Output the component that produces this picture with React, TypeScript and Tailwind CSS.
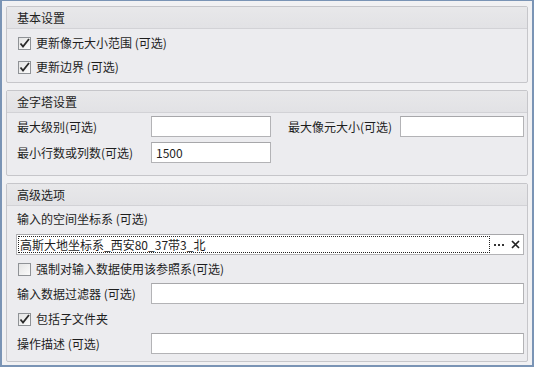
import React from "react";

const font = { fontFamily: '"Noto Sans CJK SC", "Noto Sans", sans-serif' };

function Check({ checked }: { checked: boolean }) {
  return (
    <span className="relative inline-flex h-[13px] w-[13px] shrink-0 items-center justify-center border border-[#8f9296] bg-gradient-to-br from-[#e4e4e4] to-[#fbfbfb]">
      {checked && (
        <svg width="13" height="13" viewBox="0 0 13 13" className="absolute left-[-1px] top-[-1px]">
          <path d="M2.5 6.5 L5 9.5 L11 2" fill="none" stroke="#2a2a2a" strokeWidth="1.8" />
        </svg>
      )}
    </span>
  );
}

function CheckRow({ checked, label }: { checked: boolean; label: string }) {
  return (
    <div className="flex h-[24px] shrink-0 items-center pl-[11px]">
      <Check checked={checked} />
      <span className="ml-[5px] text-[12px] leading-none text-[#1e1e1e]">{label}</span>
    </div>
  );
}

function Input({ w, value }: { w: string; value?: string }) {
  return (
    <div
      className={`${w} flex h-[21px] shrink-0 items-center border border-[#b3b3b6] border-t-[#a7a7aa] bg-white pl-[4px] text-[12px] leading-none text-[#1e1e1e]`}
    >
      {value}
    </div>
  );
}

function Group({ title, children }: { title: string; children: React.ReactNode }) {
  return (
    <div className="shrink-0 rounded-[2px] border border-[#c6c6ca] bg-[#ececef]">
      <div className="flex h-[22px] items-center border-b border-[#d2d2d6] bg-gradient-to-b from-[#e8e8ea] to-[#e2e2e5] pl-[10px] text-[12px] leading-none text-[#1e1e1e]">
        {title}
      </div>
      {children}
    </div>
  );
}

export default function App() {
  return (
    <div
      style={font}
      className="flex h-[367px] w-[534px] flex-col gap-[7px] overflow-hidden border-b-2 border-l-2 border-r-2 border-t border-[#7a94b5] bg-[#f1f1f3] px-[4px] pt-[5px]"
    >
      <Group title="基本设置">
        <div className="flex flex-col pb-[3px] pt-[2px]">
          <CheckRow checked label="更新像元大小范围 (可选)" />
          <CheckRow checked label="更新边界 (可选)" />
        </div>
      </Group>

      <Group title="金字塔设置">
        <div className="flex flex-col gap-[5px] pb-[12px] pt-[3px] text-[12px] leading-none text-[#1e1e1e]">
          <div className="flex items-center">
            <span className="w-[144px] shrink-0 pl-[10px]">最大级别(可选)</span>
            <Input w="w-[120px]" />
            <span className="ml-[17px] w-[112px] shrink-0">最大像元大小(可选)</span>
            <Input w="w-[124px]" />
          </div>
          <div className="flex items-center">
            <span className="w-[144px] shrink-0 pl-[10px]">最小行数或列数(可选)</span>
            <Input w="w-[120px]" value="1500" />
          </div>
        </div>
      </Group>

      <Group title="高级选项">
        <div className="flex flex-col pb-[7px] text-[12px] leading-none text-[#1e1e1e]">
          <div className="flex h-[26px] shrink-0 items-center pl-[10px]">输入的空间坐标系 (可选)</div>
          <div className="ml-[9px] mr-[3px] mt-[2px] flex h-[21px] shrink-0 items-center border border-[#b3b3b6] border-t-[#a7a7aa] bg-white">
            <div className="ml-[1px] flex h-[17px] w-[472px] shrink-0 items-center border border-dotted border-[#222] pl-[1px]">
              高斯大地坐标系_西安80_37带3_北
            </div>
            <svg width="10" height="3" viewBox="0 0 10 3" className="ml-[4px] mt-[2px] shrink-0">
              <rect x="0" y="0" width="2" height="2" fill="#333" />
              <rect x="4" y="0" width="2" height="2" fill="#333" />
              <rect x="8" y="0" width="2" height="2" fill="#333" />
            </svg>
            <svg width="9" height="9" viewBox="0 0 9 9" className="ml-[7px] shrink-0">
              <path d="M1 1 L8 8 M8 1 L1 8" stroke="#222" strokeWidth="1.7" />
            </svg>
          </div>
          <div className="mt-[2px]">
            <CheckRow checked={false} label="强制对输入数据使用该参照系(可选)" />
          </div>
          <div className="mt-[2px] flex items-center">
            <span className="w-[144px] shrink-0 pl-[10px]">输入数据过滤器 (可选)</span>
            <Input w="w-[373px]" />
          </div>
          <div className="mt-[3px]">
            <CheckRow checked label="包括子文件夹" />
          </div>
          <div className="mt-[2px] flex items-center">
            <span className="w-[144px] shrink-0 pl-[10px]">操作描述 (可选)</span>
            <Input w="w-[373px]" />
          </div>
        </div>
      </Group>
    </div>
  );
}
